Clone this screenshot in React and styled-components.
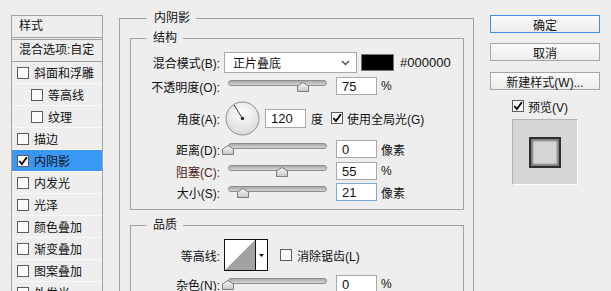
import React from 'react'
import styled, { createGlobalStyle } from 'styled-components'

const GlobalStyle = createGlobalStyle`
  html, body {
    margin: 0;
    padding: 0;
    background: #eeeeee;
  }
  body {
    font-family: "Liberation Sans", "Noto Sans CJK SC", sans-serif;
    font-size: 12px;
    color: #111;
    overflow: hidden;
  }
`;

const Dialog = styled.div`
  width: 611px;
  height: 291px;
  box-sizing: border-box;
  padding-left: 11px;
  display: flex;
  align-items: flex-start;
  overflow: hidden;
  background: #eeeeee;
`;

/* ---------- left style list ---------- */

const StylePanel = styled.div`
  flex-shrink: 0;
  margin-top: 15px;
  width: 92px;
  height: 320px;
  box-sizing: border-box;
  border: 1px solid #a3a3a3;
`;

const PanelHeader = styled.div`
  height: 21px;
  line-height: 21px;
  padding-left: 7px;
  border-bottom: 1px solid #a3a3a3;
  margin-bottom: 1px;
`;

const BlendRow = styled.div`
  height: 21px;
  line-height: 21px;
  padding-left: 7px;
  border-top: 1px solid #a3a3a3;
  border-bottom: 1px solid #a3a3a3;
  white-space: nowrap;
`;

const StyleItem = styled.div`
  height: 21px;
  display: flex;
  align-items: center;
  gap: 5px;
  padding-left: ${p => (p.$indent ? 19 : 5)}px;
  border-bottom: 1px solid #f9f9f9;
  background: ${p => (p.$active ? '#3a97f5' : 'transparent')};
  white-space: nowrap;
`;

const Box = styled.span`
  flex-shrink: 0;
  width: 12px;
  height: 12px;
  box-sizing: border-box;
  border: 1px solid #5c5c5c;
  background: #fbfbfb;
  display: inline-flex;
  align-items: center;
  justify-content: center;
  margin-left: ${p => p.$ml || 0}px;
`;

function Check({ checked, ml }) {
  return (
    <Box $ml={ml}>
      {checked && (
        <svg width="10" height="10" viewBox="0 0 10 10">
          <path d="M1.3 5 L3.9 8 L8.9 1.2" fill="none" stroke="#000" strokeWidth="1.9" />
        </svg>
      )}
    </Box>
  );
}

/* ---------- middle groups ---------- */

const Group = styled.fieldset`
  margin: ${p => p.$mt || 0}px 0 0 ${p => p.$ml || 0}px;
  padding: ${p => p.$pad};
  border: 1px solid #a3a3a3;
  min-width: 0;
  box-sizing: border-box;
  flex-shrink: 0;
  width: ${p => (p.$w ? `${p.$w}px` : 'auto')};
  height: ${p => (p.$h ? `${p.$h}px` : 'auto')};
`;

const Legend = styled.legend`
  margin-left: ${p => p.$ml}px;
  padding: 0 6px 0 7px;
  line-height: 16px;
  font-size: 12px;
`;

const Row = styled.div`
  display: flex;
  align-items: center;
  height: ${p => p.$h}px;
  margin-top: ${p => p.$mt ?? 4}px;
  white-space: nowrap;
`;

const Label = styled.span`
  flex-shrink: 0;
  width: 89px;
  text-align: right;
  color: ${p => p.$tone || '#111'};
`;

const Select = styled.div`
  margin-left: 4px;
  width: 133px;
  height: 21px;
  box-sizing: border-box;
  border: 1px solid #a9a9a9;
  background: #fff;
  display: flex;
  align-items: center;
  justify-content: space-between;
  padding: 0 6px 0 8px;
`;

const Swatch = styled.div`
  margin-left: 4px;
  width: 33px;
  height: 17px;
  box-sizing: border-box;
  border: 1px solid #777;
  background: #000;
`;

const HexText = styled.span`
  margin-left: 6px;
  font-size: 13px;
`;

const SliderWrap = styled.div`
  position: relative;
  flex-shrink: 0;
  margin-left: 8px;
  width: 99px;
  height: 18px;
`;

const Track = styled.div`
  margin-top: 3px;
  height: 6px;
  box-sizing: border-box;
  border-radius: 3px;
  border: 1px solid #8e8e8e;
  background: linear-gradient(#a9a9a9, #d6d6d6);
`;

const Thumb = styled.svg`
  position: absolute;
  top: 5px;
  margin-left: -6px;
`;

const NumField = styled.div`
  flex-shrink: 0;
  margin-left: ${p => p.$ml ?? 9}px;
  width: 41px;
  height: ${p => p.$h || 18}px;
  box-sizing: border-box;
  border: 1px solid ${p => (p.$focus ? '#7fa9d8' : '#a9a9a9')};
  background: #fff;
  padding-left: 5px;
  display: flex;
  align-items: center;
  font-size: 13px;
`;

const Unit = styled.span`
  margin-left: ${p => p.$ml ?? 4}px;
`;

const Dial = styled.svg`
  flex-shrink: 0;
  margin-left: 5px;
`;

const ContourBox = styled.div`
  margin-left: 4px;
  display: flex;
  border: 1px solid #111;
  background: #fff;
  height: 32px;
  box-sizing: border-box;
`;

const ContourArrow = styled.div`
  width: 11px;
  border-left: 1px solid #111;
  display: flex;
  align-items: center;
  justify-content: center;
`;

const CheckText = styled.span`
  margin-left: ${p => p.$ml ?? 4}px;
`;

/* ---------- right column ---------- */

const Actions = styled.div`
  flex-shrink: 0;
  margin: 15px 0 0 16px;
  width: 110px;
  display: flex;
  flex-direction: column;
  align-items: flex-start;
`;

const Button = styled.button`
  width: 110px;
  height: 18px;
  box-sizing: border-box;
  margin: ${p => p.$mt || 0}px 0 0 0;
  padding: 0;
  border: 1px solid ${p => (p.$primary ? '#3b8ee6' : '#a6a6a6')};
  border-radius: 0;
  background: linear-gradient(#fbfbfb, #ececec);
  font-family: inherit;
  font-size: 12px;
  color: #111;
`;

const PreviewToggle = styled.div`
  margin: 9px 0 0 22px;
  height: 14px;
  display: flex;
  align-items: center;
  white-space: nowrap;
`;

const PreviewBox = styled.div`
  margin: 6px 0 0 22px;
  width: 66px;
  height: 66px;
  box-sizing: border-box;
  background: #d6d6d6;
  border-top: 1px solid #b3b3b3;
  border-left: 1px solid #b3b3b3;
  border-right: 1px solid #fff;
  border-bottom: 1px solid #fff;
  display: flex;
  align-items: center;
  justify-content: center;
`;

const PreviewSquare = styled.div`
  width: 32px;
  height: 31px;
  box-sizing: border-box;
  border: 2px solid #2e2e2e;
  background: #d6d6d6;
  box-shadow: inset 0 0 2px 2px #7a7a7a;
`;

const styleItems = [
  { name: '斜面和浮雕' },
  { name: '等高线', indent: true },
  { name: '纹理', indent: true },
  { name: '描边' },
  { name: '内阴影', checked: true, active: true },
  { name: '内发光' },
  { name: '光泽' },
  { name: '颜色叠加' },
  { name: '渐变叠加' },
  { name: '图案叠加' },
  { name: '外发光' },
];

function Slider({ pos }) {
  return (
    <SliderWrap>
      <Track />
      <Thumb width="12" height="10" viewBox="0 0 12 10" style={{ left: `${pos}%` }}>
        <defs>
          <linearGradient id="thumbFill" x1="0" y1="0" x2="0" y2="1">
            <stop offset="0" stopColor="#fafafa" />
            <stop offset="1" stopColor="#c6c6c6" />
          </linearGradient>
        </defs>
        <path d="M0.5 9.5 V4 L6 0.5 L11.5 4 V9.5 Z" fill="url(#thumbFill)" stroke="#7c7c7c" />
      </Thumb>
    </SliderWrap>
  );
}

export default function App() {
  return (
    <Dialog>
      <GlobalStyle />
      <StylePanel>
        <PanelHeader>样式</PanelHeader>
        <BlendRow>混合选项:自定</BlendRow>
        {styleItems.map(item => (
          <StyleItem key={item.name} $indent={item.indent} $active={item.active}>
            <Check checked={item.checked} />
            <span>{item.name}</span>
          </StyleItem>
        ))}
      </StylePanel>

      <Group $w={355} $h={330} $mt={10} $ml={16} $pad="4px 9px 0 10px">
        <Legend $ml={17}>内阴影</Legend>

        <Group $pad="6px 0 8px 0">
          <Legend $ml={15}>结构</Legend>
          <Row $h={21} $mt={0}>
            <Label>混合模式(B):</Label>
            <Select>
              <span>正片叠底</span>
              <svg width="9" height="6" viewBox="0 0 9 6">
                <path d="M1 1 L4.5 4.5 L8 1" fill="none" stroke="#555" strokeWidth="1.5" />
              </svg>
            </Select>
            <Swatch />
            <HexText>#000000</HexText>
          </Row>
          <Row $h={18}>
            <Label>不透明度(O):</Label>
            <Slider pos={76} />
            <NumField>75</NumField>
            <Unit>%</Unit>
          </Row>
          <Row $h={38}>
            <Label>角度(A):</Label>
            <Dial width="35" height="35" viewBox="0 0 35 35">
              <defs>
                <radialGradient id="dialFill" cx="50%" cy="35%" r="65%">
                  <stop offset="0" stopColor="#fefefe" />
                  <stop offset="1" stopColor="#dadada" />
                </radialGradient>
              </defs>
              <circle cx="17.5" cy="17.5" r="16.5" fill="url(#dialFill)" stroke="#8c8c8c" />
              <line x1="17.5" y1="17.5" x2="9" y2="4" stroke="#333" strokeWidth="1" />
              <circle cx="17.5" cy="17.5" r="1.8" fill="#333" />
            </Dial>
            <NumField $ml={5} $h={19}>120</NumField>
            <Unit $ml={5}>度</Unit>
            <Check checked ml={8} />
            <CheckText>使用全局光(G)</CheckText>
          </Row>
          <Row $h={18} $mt={3}>
            <Label>距离(D):</Label>
            <Slider pos={0} />
            <NumField>0</NumField>
            <Unit>像素</Unit>
          </Row>
          <Row $h={18}>
            <Label $tone="#4e1f16">阻塞(C):</Label>
            <Slider pos={55} />
            <NumField>55</NumField>
            <Unit>%</Unit>
          </Row>
          <Row $h={18} $mt={3}>
            <Label>大小(S):</Label>
            <Slider pos={15} />
            <NumField $focus>21</NumField>
            <Unit>像素</Unit>
          </Row>
        </Group>

        <Group $mt={7} $h={120} $pad="6px 0 8px 0">
          <Legend $ml={15}>品质</Legend>
          <Row $h={32} $mt={0}>
            <Label>等高线:</Label>
            <ContourBox>
              <svg width="30" height="30" viewBox="0 0 30 30">
                <rect width="30" height="30" fill="#fff" />
                <polygon points="0,30 30,0 30,30" fill="#a2a2a2" />
              </svg>
              <ContourArrow>
                <svg width="5" height="3" viewBox="0 0 5 3">
                  <polygon points="0,0 5,0 2.5,3" fill="#111" />
                </svg>
              </ContourArrow>
            </ContourBox>
            <Check ml={12} />
            <CheckText $ml={5}>消除锯齿(L)</CheckText>
          </Row>
          <Row $h={18}>
            <Label>杂色(N):</Label>
            <Slider pos={0} />
            <NumField>0</NumField>
            <Unit>%</Unit>
          </Row>
        </Group>
      </Group>

      <Actions>
        <Button $primary>确定</Button>
        <Button $mt={10}>取消</Button>
        <Button $mt={11}>新建样式(W)...</Button>
        <PreviewToggle>
          <Check checked />
          <CheckText>预览(V)</CheckText>
        </PreviewToggle>
        <PreviewBox>
          <PreviewSquare />
        </PreviewBox>
      </Actions>
    </Dialog>
  );
}
